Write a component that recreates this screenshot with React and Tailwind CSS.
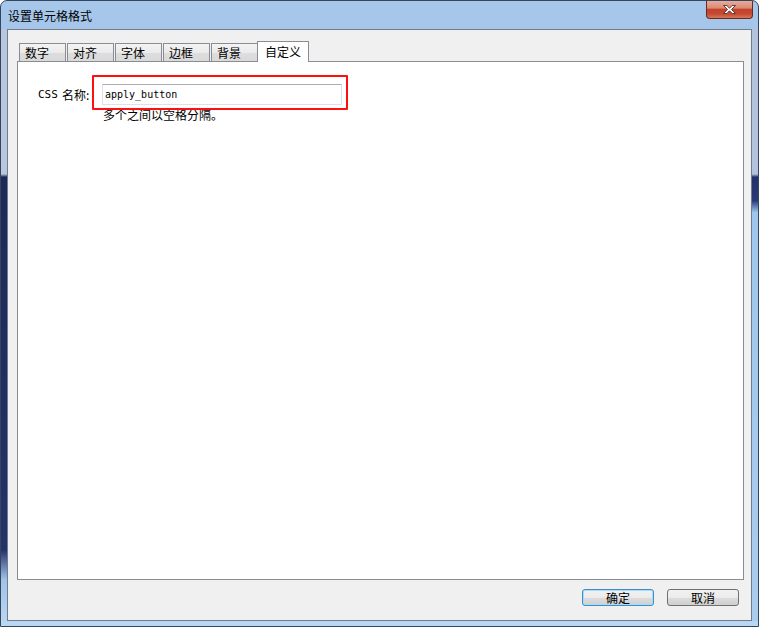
import React from "react";

const tabs = ["数字", "对齐", "字体", "边框", "背景"];

function CloseButton() {
  return (
    <div className="-mt-[1px] mr-[5px] w-[47px] h-[19px] flex items-center justify-center rounded-b-[4px] border border-t-0 border-[#6b2a20] bg-[linear-gradient(180deg,#eab0a2_0%,#db8a73_45%,#c4412a_52%,#c44a31_78%,#d9785b_100%)]">
      <svg width="15" height="11" viewBox="0 0 15 11">
        <path
          d="M1.5 1.5 L4.8 1.5 L7.5 4.2 L10.2 1.5 L13.5 1.5 L9.5 5.5 L13.5 9.5 L10.2 9.5 L7.5 6.8 L4.8 9.5 L1.5 9.5 L5.5 5.5 Z"
          fill="#ffffff"
          stroke="#5a3b36"
          strokeWidth="1"
        />
      </svg>
    </div>
  );
}

function App() {
  return (
    <div
      className="w-[759px] h-[627px] flex flex-col overflow-hidden rounded-t-[7px] border border-[#34455f] bg-[linear-gradient(180deg,#a6c6ea_0%,#98bce4_100%)] text-black"
      style={{ fontFamily: '"Noto Sans CJK SC", "Liberation Sans", sans-serif' }}
    >
      {/* title bar */}
      <div className="h-[28px] flex items-start justify-between">
        <div className="pl-[7px] pt-[8px] text-[12px] leading-[14px]">设置单元格格式</div>
        <CloseButton />
      </div>

      <div className="flex flex-1">
        <div className="w-[6px] bg-[linear-gradient(180deg,#b9c7dd_0%,#b9c7dd_24.5%,#1d2958_25%,#24326a_88%,#9fc3e8_93%,#b8d6f2_100%)]" />

        {/* client area */}
        <div className="flex-1 flex flex-col border border-[#6f7c8e] bg-[#f0f0f0]">
          {/* tabs */}
          <div className="h-[31px] pt-[11px] pl-[11px] flex items-end gap-[1px]">
            {tabs.map((t) => (
              <div
                key={t}
                className="w-[47px] h-[18px] pl-[5px] pt-[1px] text-[12px] leading-[16px] border border-b-0 border-[#898c95] bg-[linear-gradient(180deg,#f3f3f3_0%,#ebebeb_50%,#dddddd_51%,#d9d9d9_100%)]"
              >
                {t}
              </div>
            ))}
            <div className="relative z-10 -ml-[2px] -mb-[1px] w-[52px] h-[21px] pl-[7px] pt-[2px] text-[12px] leading-[16px] border border-b-0 border-[#898c95] bg-white">
              自定义
            </div>
          </div>

          {/* panel */}
          <div className="flex-1 ml-[9px] mr-[7px] border border-[#898c95] bg-white pt-[22px] pl-[20px]">
            <div className="flex items-center">
              <div className="w-[64px] flex items-center text-[12px] leading-[14px]">
                <span className="text-[11px] w-[24px]" style={{ fontFamily: '"DejaVu Sans Mono", monospace' }}>CSS</span>
                <span>名称:</span>
              </div>
              <div className="relative w-[240px] h-[21px] border border-[#dde2e8] border-t-[#abadb3] flex items-center pl-[2px]">
                <span className="text-[10px] leading-[12px]" style={{ fontFamily: '"DejaVu Sans Mono", monospace' }}>
                  apply_button
                </span>
                <div className="absolute -left-[11px] -top-[10px] w-[256px] h-[35px] border-2 border-[#ff1010] rounded-[1px]" />
              </div>
            </div>
            <div className="ml-[65px] mt-[3px] text-[12px] leading-[14px]">多个之间以空格分隔。</div>
          </div>

          {/* buttons */}
          <div className="h-[40px] pt-[9px] pr-[12px] flex justify-end gap-[13px]">
            <button className="w-[72px] h-[17px] rounded-[3px] border border-[#3c8dc8] shadow-[inset_0_0_0_1px_#a9dcf6] bg-[linear-gradient(180deg,#f2f2f2_0%,#ebebeb_50%,#dddddd_51%,#cfcfcf_100%)] text-[12px] leading-[15px]">
              确定
            </button>
            <button className="w-[72px] h-[17px] rounded-[3px] border border-[#707070] bg-[linear-gradient(180deg,#f2f2f2_0%,#ebebeb_50%,#dddddd_51%,#cfcfcf_100%)] text-[12px] leading-[15px]">
              取消
            </button>
          </div>
        </div>

        <div className="w-[6px] bg-[linear-gradient(180deg,#b3c3dd_0%,#b3c3dd_24.5%,#23306a_25%,#2a3a78_29%,#9fc6ec_31%,#a9cdee_100%)]" />
      </div>

      <div className="h-[5px] bg-[#b9d6f2]" />
    </div>
  );
}

export default App;
